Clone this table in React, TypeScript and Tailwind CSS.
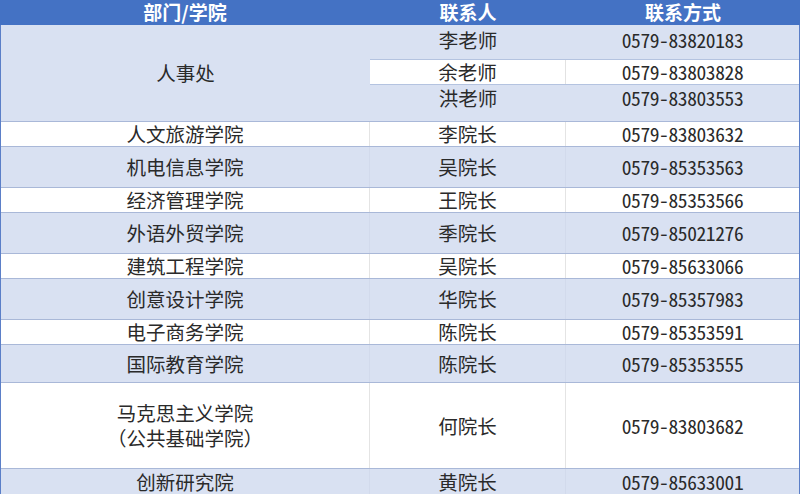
import React from "react";

const cjk = '"Noto Sans CJK SC", "Noto Sans", sans-serif';
const num = '"Noto Sans Mono CJK SC", "Noto Sans CJK SC", sans-serif';

type Row = {
  dept: string[];
  person: string;
  phone: string;
  blue: boolean;
  h: string;
};

const rows: Row[] = [
  { dept: ["人文旅游学院"], person: "李院长", phone: "0579-83803632", blue: false, h: "h-[25px]" },
  { dept: ["机电信息学院"], person: "吴院长", phone: "0579-85353563", blue: true, h: "h-[41px]" },
  { dept: ["经济管理学院"], person: "王院长", phone: "0579-85353566", blue: false, h: "h-[25px]" },
  { dept: ["外语外贸学院"], person: "季院长", phone: "0579-85021276", blue: true, h: "h-[41px]" },
  { dept: ["建筑工程学院"], person: "吴院长", phone: "0579-85633066", blue: false, h: "h-[25px]" },
  { dept: ["创意设计学院"], person: "华院长", phone: "0579-85357983", blue: true, h: "h-[41px]" },
  { dept: ["电子商务学院"], person: "陈院长", phone: "0579-85353591", blue: false, h: "h-[25px]" },
  { dept: ["国际教育学院"], person: "陈院长", phone: "0579-85353555", blue: true, h: "h-[38px]" },
  { dept: ["马克思主义学院", "（公共基础学院）"], person: "何院长", phone: "0579-83803682", blue: false, h: "h-[86px]" },
  { dept: ["创新研究院"], person: "黄院长", phone: "0579-85633001", blue: true, h: "h-[26px]" },
];

const hr = [
  { person: "李老师", phone: "0579-83820183" },
  { person: "余老师", phone: "0579-83803828" },
  { person: "洪老师", phone: "0579-83803553" },
];

function Phone({ v }: { v: string }) {
  return (
    <span className="tracking-[-0.4px]" style={{ fontFamily: num }}>
      {v}
    </span>
  );
}

export default function App() {
  return (
    <div
      className="w-[800px] h-[494px] overflow-hidden bg-white text-[19.5px] leading-[22px] text-[#2a2a2a]"
      style={{ fontFamily: cjk }}
    >
      {/* header */}
      <div className="grid grid-cols-[370px_196px_234px] h-[25px] bg-[#4472c4] text-white font-bold text-[19px] leading-[24px]">
        <div className="text-center">部门/学院</div>
        <div className="text-center">联系人</div>
        <div className="text-center">联系方式</div>
      </div>

      <div className="border-l border-r border-b-2 border-l-[#5b7fc8] border-r-[#5b7fc8] border-b-[#8ea6d8]">
        {/* 人事处 block */}
        <div className="grid grid-cols-[369px_196px_233px] h-[96px] bg-[#d9e1f2]">
          <div className="flex items-center justify-center">人事处</div>
          <div className="col-span-2 flex flex-col">
            <div className="h-[34px] grid grid-cols-[196px_233px] pt-[4px]">
              <div className="text-center">{hr[0].person}</div>
              <div className="text-center">
                <Phone v={hr[0].phone} />
              </div>
            </div>
            <div className="h-[26px] grid grid-cols-[196px_233px] bg-white border-t border-b border-[#b4c3e0] leading-[20px]">
              <div className="text-center border-r border-[#e2e2e2] pt-[2px]">{hr[1].person}</div>
              <div className="text-center pt-[2px]">
                <Phone v={hr[1].phone} />
              </div>
            </div>
            <div className="h-[36px] grid grid-cols-[196px_233px] pt-[2px]">
              <div className="text-center">{hr[2].person}</div>
              <div className="text-center">
                <Phone v={hr[2].phone} />
              </div>
            </div>
          </div>
        </div>

        {rows.map((r, i) => (
          <div
            key={i}
            className={`grid grid-cols-[369px_196px_233px] border-t border-[#a9b8d8] ${r.h} ${
              r.blue ? "bg-[#d9e1f2]" : "bg-white"
            }`}
          >
            <div
              className={`flex flex-col items-center justify-center gap-[3px] border-r ${
                r.blue ? "border-[#d2daec]" : "border-[#e4e4e4]"
              }`}
            >
              {r.dept.map((d) => (
                <div key={d}>{d}</div>
              ))}
            </div>
            <div
              className={`flex items-center justify-center border-r ${
                r.blue ? "border-[#d2daec]" : "border-[#e4e4e4]"
              }`}
            >
              {r.person}
            </div>
            <div className="flex items-center justify-center">
              <Phone v={r.phone} />
            </div>
          </div>
        ))}
      </div>
    </div>
  );
}
